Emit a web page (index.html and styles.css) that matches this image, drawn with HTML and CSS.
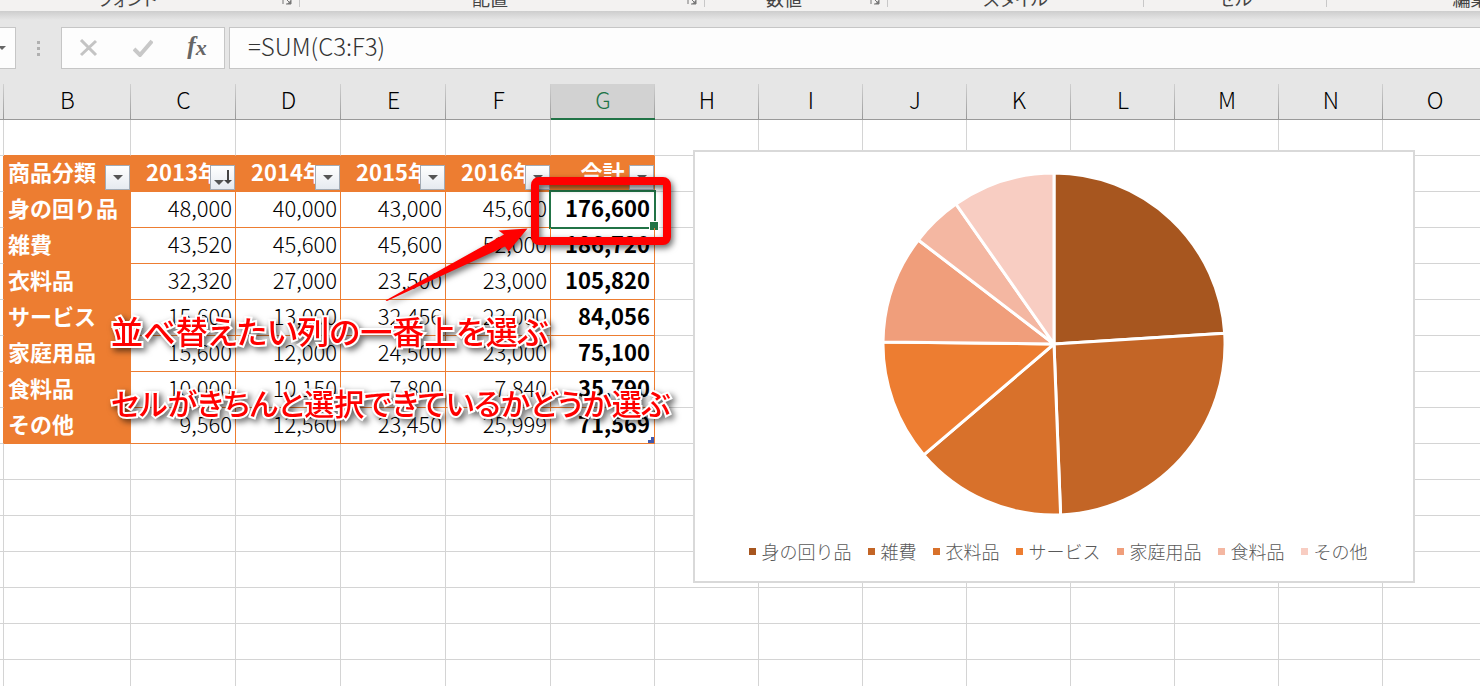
FILE: index.html
```html
<!DOCTYPE html>
<html lang="ja">
<head>
<meta charset="utf-8">
<title>Excel</title>
<link rel="stylesheet" href="styles.css">
</head>
<body>
<div class="app">
  <div class="ribbon">
    <div class="group group-font"><span class="group-name">フォント</span><button class="launcher" aria-label="フォントの設定"><svg width="10" height="10" viewBox="0 0 10 10"><path d="M1 9V1h8M4 4l4 4M9 4v5H4" fill="none" stroke="#777" stroke-width="1"/><path d="M9 5v4H5z" fill="#777"/></svg></button></div>
    <div class="group group-align"><span class="group-name">配置</span><button class="launcher" aria-label="配置の設定"><svg width="10" height="10" viewBox="0 0 10 10"><path d="M1 9V1h8M4 4l4 4M9 4v5H4" fill="none" stroke="#777" stroke-width="1"/><path d="M9 5v4H5z" fill="#777"/></svg></button></div>
    <div class="group group-number"><span class="group-name">数値</span><button class="launcher" aria-label="表示形式"><svg width="10" height="10" viewBox="0 0 10 10"><path d="M1 9V1h8M4 4l4 4M9 4v5H4" fill="none" stroke="#777" stroke-width="1"/><path d="M9 5v4H5z" fill="#777"/></svg></button></div>
    <div class="group group-style"><span class="group-name">スタイル</span></div>
    <div class="group group-cell"><span class="group-name">セル</span></div>
    <div class="group group-edit"><span class="group-name">編集</span></div>
  </div>
  <div class="formula-bar">
    <button class="name-box" aria-label="名前ボックス"><svg width="8" height="5" viewBox="0 0 8 5"><path d="M0 0h8L4 4z" fill="#666"/></svg></button>
    <div class="grip"><i></i><i></i><i></i></div>
    <div class="formula-tools">
      <button aria-label="キャンセル"><svg width="20" height="18" viewBox="0 0 20 18"><path d="M2 1L17 16M17 2L2 16" fill="none" stroke="#c4c4c4" stroke-width="3"/></svg></button>
      <button aria-label="入力"><svg width="20" height="18" viewBox="0 0 20 18"><path d="M1 10l6 6L19 2" fill="none" stroke="#c8c8c8" stroke-width="4"/></svg></button>
      <button class="fx" aria-label="関数の挿入"><span>f</span><span class="fx-x">x</span></button>
    </div>
    <input class="formula" type="text" value="=SUM(C3:F3)" aria-label="数式バー">
  </div>
  <main class="sheet">
    <table class="grid" id="grid"></table>

    <section class="chart">
      <svg class="pie" viewBox="-174 -174 348 348" role="img" aria-label="合計の円グラフ">
        <g stroke="#fff" stroke-width="3" stroke-linejoin="round">
          <path fill="#a7561f" d="M0 0L0 -171A171 171 0 0 1 170.7 -10.7Z"/>
          <path fill="#c36526" d="M0 0L170.7 -10.7A171 171 0 0 1 6.6 170.9Z"/>
          <path fill="#d8712b" d="M0 0L6.6 170.9A171 171 0 0 1 -130.2 110.9Z"/>
          <path fill="#ed7d31" d="M0 0L-130.2 110.9A171 171 0 0 1 -171 -2.1Z"/>
          <path fill="#f09e7b" d="M0 0L-171 -2.1A171 171 0 0 1 -135.7 -104Z"/>
          <path fill="#f4b7a2" d="M0 0L-135.7 -104A171 171 0 0 1 -98.1 -140Z"/>
          <path fill="#f8cdc2" d="M0 0L-98.1 -140A171 171 0 0 1 0 -171Z"/>
        </g>
      </svg>
      <ul class="legend">
        <li class="s1">身の回り品</li>
        <li class="s2">雑費</li>
        <li class="s3">衣料品</li>
        <li class="s4">サービス</li>
        <li class="s5">家庭用品</li>
        <li class="s6">食料品</li>
        <li class="s7">その他</li>
      </ul>
    </section>

    <div class="highlight"></div>
    <svg class="arrow" width="160" height="90" viewBox="380 220 160 90"><path d="M385.500 300.500L504 234.500L498.500 230.500L527.500 228.500L508.500 251.500L505 246.500L387 301Z" fill="#f00"/></svg>
    <div class="notes">
      <p>並べ替えたい列の一番上を選ぶ</p>
      <p class="note-small">セルがきちんと選択できているかどうか選ぶ</p>
    </div>
  </main>
</div>
<script src="script.js"></script>
</body>
</html>
```

FILE: styles.css
```css
* { box-sizing: border-box; }

body {
  margin: 0;
  font-family: "Noto Sans CJK JP", sans-serif;
  color: #000;
  background: #fff;
}

button { margin: 0; padding: 0; border: 0; background: none; font: inherit; }

.app {
  display: flex;
  flex-direction: column;
  height: 100vh;
  overflow: hidden;
}

/* Ribbon */
.ribbon {
  display: flex;
  flex: none;
  height: 11px;
  overflow: hidden;
  background: #f3f2f1;
}
.group {
  display: flex;
  flex: none;
  align-items: flex-end;
  height: 7px;
  border-right: 1px solid #c8c8c8;
}
.group-name {
  flex: 1;
  text-align: center;
  font-size: 18px;
  line-height: 18px;
  color: #444;
  font-feature-settings: "palt";
}
.launcher { width: 24px; height: 10px; display: flex; padding-left: 7px; margin-bottom: 2px; }
.group-font { width: 300px; }
.group-font .group-name { padding-right: 20px; }
.group-align { width: 405px; }
.group-number { width: 183px; }
.group-style { width: 256px; }
.group-cell { width: 183px; }
.group-edit { width: 288px; }

/* Formula bar */
.formula-bar {
  display: flex;
  flex: none;
  height: 73px;
  padding: 16px 0 15px;
  background: linear-gradient(#cdcdcd, #e6e6e6 9px);
}
.name-box {
  display: flex;
  align-items: center;
  width: 16px;
  border: 1px solid #c6c6c6;
  border-left: 0;
  background: #fdfdfd;
}
.name-box svg { margin-left: -2px; }
.grip {
  display: flex;
  flex-direction: column;
  justify-content: center;
  align-items: center;
  gap: 3px;
  width: 45px;
}
.grip i { width: 3px; height: 3px; background: #b0b0b0; }
.formula-tools {
  display: flex;
  justify-content: space-around;
  align-items: center;
  width: 164px;
  border: 1px solid #c6c6c6;
  background: #fdfdfd;
}
.formula-tools button { display: flex; justify-content: center; width: 24px; }
.formula-tools .fx {
  font: italic bold 25px/26px "Liberation Serif", serif;
  color: #666;
}
.fx-x { font-size: 22px; line-height: 30px; }
.formula {
  flex: 1;
  min-width: 0;
  margin-left: 4px;
  padding: 0 18px 6px;
  border: 1px solid #c6c6c6;
  border-right: 0;
  background: #fdfdfd;
  font: 300 24px "Noto Sans CJK JP", sans-serif;
  color: #333;
}

/* Worksheet */
.sheet {
  position: relative;
  flex: 1;
  min-height: 0;
  overflow: hidden;
}
.grid {
  table-layout: fixed;
  width: 0;
  border-collapse: separate;
  border-spacing: 0;
  font-size: 22px;
  font-weight: 300;
  line-height: 30px;
}
.col-a { width: 4px; }
.col-b { width: 127px; }
.col-year { width: 105px; }
.col-std { width: 104px; }
.grid th, .grid td {
  height: 36px;
  padding: 0 3px 0 4px;
  vertical-align: top;
  white-space: nowrap;
  border-right: 1px solid #d4d4d4;
  border-bottom: 1px solid #d4d4d4;
}
.grid .corner, .grid .letter {
  padding: 0;
  border-right: 0;
  border-bottom: 1px solid #999;
  font-size: 23px;
  font-weight: 300;
  text-align: center;
  background: linear-gradient(#d0d0d0, #999) right / 1px 100% no-repeat #e6e6e6;
}
.grid .letter.active {
  border-bottom: 2px solid #217346;
  background-color: #d2d2d2;
  color: #217346;
}
.grid .tbl-edge { border-bottom-color: #ed7d31; }
.grid .tbl-side { border-right-color: #ed7d31; padding: 0; }
.grid .tbl-head {
  position: relative;
  padding: 0;
  border-color: #ed7d31;
  background: #ed7d31;
  color: #fff;
  font-weight: 700;
  text-align: center;
}
.grid .tbl-head.first { padding-left: 4px; text-align: left; }
.grid .tbl-name {
  border-color: #ed7d31;
  background: #ed7d31;
  color: #fff;
  font-weight: 700;
  text-align: left;
}
.grid .num { position: relative; border-color: #ed7d31; text-align: right; }
.grid .total { font-weight: 700; padding-right: 4px; }

.filter {
  position: absolute;
  right: 0;
  bottom: 1px;
  display: flex;
  width: 25px;
  height: 25px;
  border: 1px solid #a3abb5;
  background: linear-gradient(#fff, #e6eaf0);
}
.selection {
  position: absolute;
  inset: -2px;
  border: 2px solid #217346;
}
.selection::after {
  content: "";
  position: absolute;
  right: -5px;
  bottom: -4px;
  width: 8px;
  height: 8px;
  border: 1px solid #fff;
  background: #217346;
}
.table-corner { position: absolute; right: 0; bottom: 0; }

/* Chart */
.chart {
  position: absolute;
  left: 693px;
  top: 66px;
  display: flex;
  flex-direction: column;
  align-items: center;
  width: 722px;
  padding: 18px 0 15px;
  border: 2px solid #d9d9d9;
  background: #fff;
}
.pie { width: 348px; height: 348px; }
.legend {
  display: flex;
  gap: 16px;
  margin: 19px 0 0;
  padding: 0 0 0 8px;
  list-style: none;
  font-size: 18px;
  font-weight: 300;
  line-height: 29px;
  color: #595959;
}
.legend li { display: flex; align-items: center; gap: 6px; }
.legend li::before { content: ""; width: 7px; height: 7px; background: currentColor; }
.s1::before { color: #a7561f; }
.s2::before { color: #c36526; }
.s3::before { color: #d8712b; }
.s4::before { color: #ed7d31; }
.s5::before { color: #f09e7b; }
.s6::before { color: #f4b7a2; }
.s7::before { color: #f8cdc2; }

/* Annotations */
.highlight {
  position: absolute;
  left: 531px;
  top: 93px;
  width: 140px;
  height: 68px;
  border: 8px solid #f00;
  border-radius: 8px;
  filter: drop-shadow(2px 3px 3px rgba(0, 0, 0, 0.6));
}
.arrow {
  position: absolute;
  left: 380px;
  top: 136px;
  filter: drop-shadow(2px 3px 3px rgba(0, 0, 0, 0.6));
}
.notes {
  position: absolute;
  left: 111px;
  top: 210px;
  filter: drop-shadow(3px 3px 3px rgba(0, 0, 0, 0.6));
}
.notes p {
  margin: 0;
  font-size: 32px;
  font-weight: 500;
  line-height: 72px;
  white-space: nowrap;
  color: #f00;
  font-feature-settings: "palt";
  -webkit-text-stroke: 4px #fff;
  paint-order: stroke fill;
}
.notes .note-small { font-size: 30px; }
```

FILE: script.js
```js
const letters = ["B", "C", "D", "E", "F", "G", "H", "I", "J", "K", "L", "M", "N", "O", "P", "Q", "R", "S"];
const heads = ["商品分類", "2013年", "2014年", "2015年", "2016年", "合計"];
const rows = [
  ["身の回り品", "48,000", "40,000", "43,000", "45,600", "176,600"],
  ["雑費", "43,520", "45,600", "45,600", "52,000", "186,720"],
  ["衣料品", "32,320", "27,000", "23,500", "23,000", "105,820"],
  ["サービス", "15,600", "13,000", "32,456", "23,000", "84,056"],
  ["家庭用品", "15,600", "12,000", "24,500", "23,000", "75,100"],
  ["食料品", "10,000", "10,150", "7,800", "7,840", "35,790"],
  ["その他", "9,560", "12,560", "23,450", "25,999", "71,569"]
];
const rowCount = 24;

const down = '<path d="M7 9h10l-5 5z" fill="#555"/>';
const sorted = '<path d="M3 14h10l-5 5z" fill="#555"/><path d="M16 4h2v10h3l-4 4-4-4h3z" fill="#444"/>';
const filter = (name, icon) =>
  `<button class="filter" aria-label="${name}のフィルター"><svg width="23" height="23" viewBox="0 0 23 23">${icon}</svg></button>`;

function colClass(i) {
  if (i === 0) return "col-b";
  return i < 5 ? "col-year" : "col-std";
}

function cell(r, c) {
  if (r === 0) return `<td${c < 6 ? ' class="tbl-edge"' : ""}></td>`;
  if (c > 5 || r > rows.length + 1) return "<td></td>";
  if (r === 1) {
    return `<th scope="col" class="tbl-head${c === 0 ? " first" : ""}">${heads[c]}${filter(heads[c], c === 1 ? sorted : down)}</th>`;
  }
  const value = rows[r - 2][c];
  if (c === 0) return `<th scope="row" class="tbl-name">${value}</th>`;
  let extra = "";
  if (c === 5 && r === 2) extra = '<span class="selection"></span>';
  if (c === 5 && r === rows.length + 1) {
    extra = '<svg class="table-corner" width="6" height="6" viewBox="0 0 6 6"><path d="M3 0h3v6H0V3h3z" fill="#4059ad"/></svg>';
  }
  return `<td class="num${c === 5 ? " total" : ""}">${value}${extra}</td>`;
}

let html = '<colgroup><col class="col-a">' + letters.map((l, i) => `<col class="${colClass(i)}">`).join("") + "</colgroup>";
html += '<thead><tr><td class="corner"></td>' +
  letters.map(l => `<th scope="col" class="letter${l === "G" ? " active" : ""}">${l}</th>`).join("") + "</tr></thead><tbody>";
for (let r = 0; r < rowCount; r++) {
  const inTable = r > 0 && r <= rows.length + 1;
  html += `<tr><td class="${inTable ? "tbl-side" : "gutter"}"></td>` + letters.map((l, c) => cell(r, c)).join("") + "</tr>";
}
document.getElementById("grid").innerHTML = html + "</tbody>";
```
